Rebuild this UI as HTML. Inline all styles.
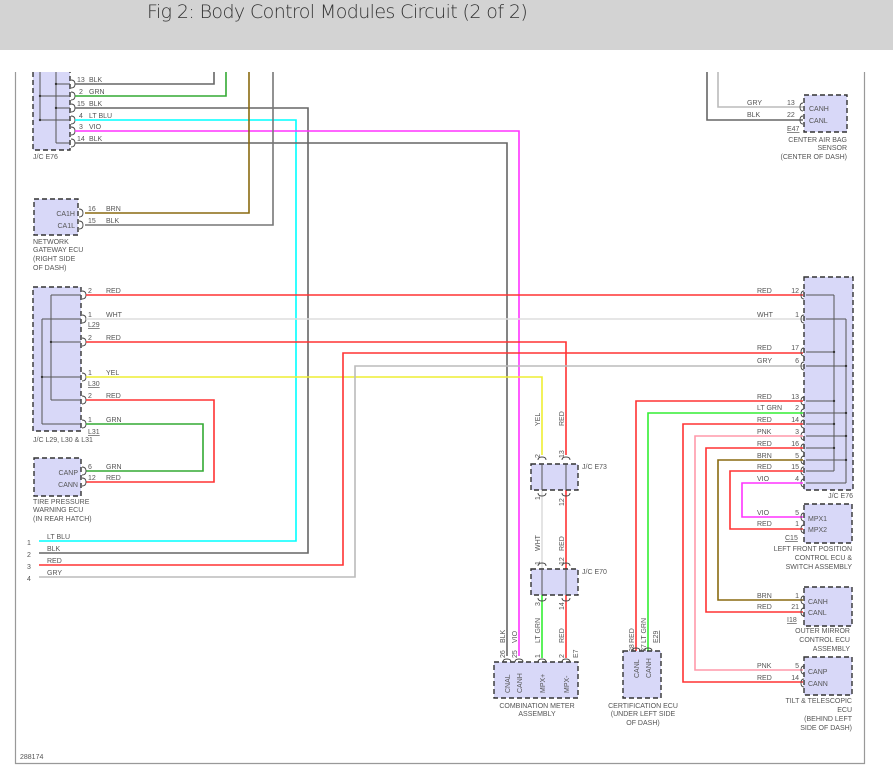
<!DOCTYPE html>
<html><head><meta charset="utf-8"><style>
html,body{margin:0;padding:0;background:#fff;width:893px;height:783px;overflow:hidden}
#hdr{position:absolute;left:0;top:0;width:893px;height:50px;background:#d3d3d3}
#hdr span{position:absolute;left:147px;top:1px;font:19px "DejaVu Sans","Liberation Sans",sans-serif;font-weight:300;color:#333;letter-spacing:-0.6px}
svg{position:absolute;left:0;top:0}
text{font-family:"Liberation Sans",sans-serif;font-size:7px;fill:#555}
.w{fill:none;stroke-width:1.6}
.bx{fill:#d8d8f8;stroke:#333;stroke-width:1.4;stroke-dasharray:5,3}
.in{stroke:#555;stroke-width:1;fill:none}
.pin{stroke:#444;stroke-width:0.9;fill:none}
</style></head><body>
<div id="hdr"><span>Fig 2: Body Control Modules Circuit (2 of 2)</span></div>
<svg width="893" height="783" viewBox="0 0 893 783">
<path d="M15.5 72V763.5H864.5V72" fill="none" stroke="#999" stroke-width="1.2"/>
<text x="20" y="759" font-size="6.5">288174</text>

<rect x="33" y="72" width="37" height="78" fill="#d8d8f8"/>
<path d="M33 72V150H70V72" fill="none" stroke="#333" stroke-width="1.4" stroke-dasharray="5,3"/>
<path class="in" d="M40 72V120M56 72V143M56 84H70M40 96H70M56 108H70M40 120H70M56 143H70"/>
<g fill="#333"><circle cx="56" cy="84" r="1.2"/><circle cx="40" cy="96" r="1.2"/><circle cx="56" cy="108" r="1.2"/><circle cx="40" cy="120" r="1.2"/></g>
<g class="pin"><path d="M71 80q4 0 4 4q0 4-4 4M71 92q4 0 4 4q0 4-4 4M71 104q4 0 4 4q0 4-4 4M71 116q4 0 4 4q0 4-4 4M71 127q4 0 4 4q0 4-4 4M71 139q4 0 4 4q0 4-4 4"/></g>
<text x="77" y="82">13</text><text x="89" y="82">BLK</text>
<text x="79" y="94">2</text><text x="89" y="94">GRN</text>
<text x="77" y="106">15</text><text x="89" y="106">BLK</text>
<text x="79" y="118">4</text><text x="89" y="118">LT BLU</text>
<text x="79" y="129">3</text><text x="89" y="129">VIO</text>
<text x="77" y="141">14</text><text x="89" y="141">BLK</text>
<text x="33" y="159" font-size="6.5">J/C E76</text>
<path class="w" stroke="#666" d="M75 84H214V72"/>
<path class="w" stroke="#3a3" d="M75 96H226V72"/>
<path class="w" stroke="#666" d="M75 108H308V553H39"/>
<path class="w" stroke="#0ff" d="M75 120H296V541H39"/>
<path class="w" stroke="#f3f" d="M75 131H519V656"/>
<path class="w" stroke="#666" d="M75 143H507V656"/>
<path class="w" stroke="#8a6a10" d="M85 213H249V72"/>
<path class="w" stroke="#777" d="M85 225H273V72"/>

<rect class="bx" x="34" y="199" width="44" height="36"/>
<text x="75" y="216" text-anchor="end">CA1H</text><text x="75" y="228" text-anchor="end">CA1L</text>
<g class="pin"><path d="M79 209q4 0 4 4q0 4-4 4M79 221q4 0 4 4q0 4-4 4"/></g>
<text x="88" y="211">16</text><text x="106" y="211">BRN</text>
<text x="88" y="223">15</text><text x="106" y="223">BLK</text>
<text x="33" y="244">NETWORK</text><text x="33" y="252">GATEWAY ECU</text><text x="33" y="261">(RIGHT SIDE</text><text x="33" y="270">OF DASH)</text>

<rect class="bx" x="33" y="287" width="48" height="144"/>
<path class="in" d="M51 295V400M42 319V424M51 295H81M42 319H81M51 342H81M42 377H81M51 400H81M42 424H81"/>
<g fill="#333"><circle cx="51" cy="342" r="1.2"/><circle cx="42" cy="377" r="1.2"/></g>
<g class="pin"><path d="M82 291q4 0 4 4q0 4-4 4M82 315q4 0 4 4q0 4-4 4M82 338q4 0 4 4q0 4-4 4M82 373q4 0 4 4q0 4-4 4M82 396q4 0 4 4q0 4-4 4M82 420q4 0 4 4q0 4-4 4"/></g>
<text x="88" y="293">2</text><text x="106" y="293">RED</text>
<text x="88" y="317">1</text><text x="106" y="317">WHT</text><text x="88" y="327" text-decoration="underline">L29</text>
<text x="88" y="340">2</text><text x="106" y="340">RED</text>
<text x="88" y="375">1</text><text x="106" y="375">YEL</text><text x="88" y="386" text-decoration="underline">L30</text>
<text x="88" y="398">2</text><text x="106" y="398">RED</text>
<text x="88" y="422">1</text><text x="106" y="422">GRN</text><text x="88" y="434" text-decoration="underline">L31</text>
<text x="33" y="442">J/C L29, L30 &amp; L31</text>
<path class="w" stroke="#f33" d="M86 295H803"/>
<path class="w" stroke="#ddd" d="M86 319H803"/>
<path class="w" stroke="#f33" d="M86 342H566V455"/>
<path class="w" stroke="#ee3" d="M86 377H542V455"/>
<path class="w" stroke="#f33" d="M86 400H214V482H86"/>
<path class="w" stroke="#3a3" d="M86 424H203V471H86"/>

<rect class="bx" x="34" y="458" width="47" height="38"/>
<text x="78" y="475" text-anchor="end">CANP</text><text x="78" y="487" text-anchor="end">CANN</text>
<g class="pin"><path d="M82 467q4 0 4 4q0 4-4 4M82 478q4 0 4 4q0 4-4 4"/></g>
<text x="88" y="469">6</text><text x="106" y="469">GRN</text>
<text x="88" y="480">12</text><text x="106" y="480">RED</text>
<text x="33" y="504">TIRE PRESSURE</text><text x="33" y="512">WARNING ECU</text><text x="33" y="521">(IN REAR HATCH)</text>

<text x="27" y="545">1</text><text x="27" y="557">2</text><text x="27" y="569">3</text><text x="27" y="581">4</text>
<text x="47" y="539">LT BLU</text><text x="47" y="551">BLK</text><text x="47" y="563">RED</text><text x="47" y="575">GRY</text>
<path class="w" stroke="#f33" stroke-width="2" d="M39 565H343V353H803"/>
<path class="w" stroke="#bbb" d="M39 577H355V366H803"/>

<path class="w" stroke="#bbb" d="M718 72V107H803"/>
<path class="w" stroke="#666" d="M707 72V120H803"/>
<rect class="bx" x="804" y="95" width="43" height="37"/>
<g class="pin"><path d="M803 103q-3 0-3 4q0 4 3 4M803 116q-3 0-3 4q0 4 3 4"/></g>
<text x="809" y="111">CANH</text><text x="809" y="123">CANL</text>
<text x="747" y="105">GRY</text><text x="787" y="105">13</text>
<text x="747" y="117">BLK</text><text x="787" y="117">22</text>
<text x="787" y="131" text-decoration="underline">E47</text>
<text x="847" y="142" text-anchor="end">CENTER AIR BAG</text><text x="847" y="150" text-anchor="end">SENSOR</text><text x="847" y="159" text-anchor="end">(CENTER OF DASH)</text>

<rect class="bx" x="804" y="277" width="49" height="213"/>
<path class="in" d="M834 295V471M846 319V483M806 295H834M806 319H846M806 352H834M806 366H846M806 401H834M806 413H846M806 424H834M806 436H846M806 448H834M806 460H846M806 471H834M806 483H846"/>
<g fill="#333"><circle cx="834" cy="352" r="1.2"/><circle cx="846" cy="366" r="1.2"/><circle cx="834" cy="401" r="1.2"/><circle cx="846" cy="413" r="1.2"/><circle cx="834" cy="424" r="1.2"/><circle cx="846" cy="436" r="1.2"/><circle cx="834" cy="448" r="1.2"/><circle cx="846" cy="460" r="1.2"/></g>
<g class="pin"><path d="M804 291q-3 0-3 4q0 4 3 4M804 315q-3 0-3 4q0 4 3 4M804 348q-3 0-3 4q0 4 3 4M804 362q-3 0-3 4q0 4 3 4M804 397q-3 0-3 4q0 4 3 4M804 409q-3 0-3 4q0 4 3 4M804 420q-3 0-3 4q0 4 3 4M804 432q-3 0-3 4q0 4 3 4M804 444q-3 0-3 4q0 4 3 4M804 456q-3 0-3 4q0 4 3 4M804 467q-3 0-3 4q0 4 3 4M804 479q-3 0-3 4q0 4 3 4"/></g>
<g text-anchor="end">
<text x="799" y="293">12</text><text x="799" y="317">1</text><text x="799" y="350">17</text><text x="799" y="363">6</text>
<text x="799" y="399">13</text><text x="799" y="410">2</text><text x="799" y="422">14</text><text x="799" y="434">3</text>
<text x="799" y="446">16</text><text x="799" y="458">5</text><text x="799" y="469">15</text><text x="799" y="481">4</text>
</g>
<text x="757" y="293">RED</text><text x="757" y="317">WHT</text><text x="757" y="350">RED</text><text x="757" y="363">GRY</text>
<text x="757" y="399">RED</text><text x="757" y="410">LT GRN</text><text x="757" y="422">RED</text><text x="757" y="434">PNK</text>
<text x="757" y="446">RED</text><text x="757" y="458">BRN</text><text x="757" y="469">RED</text><text x="757" y="481">VIO</text>
<text x="853" y="498" text-anchor="end">J/C E76</text>
<path class="w" stroke="#f33" d="M803 401H636V652"/>
<path class="w" stroke="#3e3" d="M803 413H648V652"/>
<path class="w" stroke="#f33" d="M803 424H683V682H803"/>
<path class="w" stroke="#f9a" d="M803 436H695V670H803"/>
<path class="w" stroke="#f33" d="M803 448H706V612H803"/>
<path class="w" stroke="#8a6a10" d="M803 460H718V600H803"/>
<path class="w" stroke="#f33" d="M803 471H730V529H803"/>
<path class="w" stroke="#f3f" d="M803 483H742V517H803"/>

<rect class="bx" x="804" y="504" width="48" height="39"/>
<g class="pin"><path d="M804 513q-3 0-3 4q0 4 3 4M804 525q-3 0-3 4q0 4 3 4"/></g>
<text x="808" y="521">MPX1</text><text x="808" y="532">MPX2</text>
<text x="757" y="515">VIO</text><text x="799" y="515" text-anchor="end">5</text>
<text x="757" y="526">RED</text><text x="799" y="526" text-anchor="end">1</text>
<text x="785" y="540" text-decoration="underline">C15</text>
<g text-anchor="end"><text x="852" y="551">LEFT FRONT POSITION</text><text x="852" y="560">CONTROL ECU &amp;</text><text x="852" y="569">SWITCH ASSEMBLY</text></g>

<rect class="bx" x="804" y="587" width="48" height="39"/>
<g class="pin"><path d="M804 596q-3 0-3 4q0 4 3 4M804 608q-3 0-3 4q0 4 3 4"/></g>
<text x="808" y="604">CANH</text><text x="808" y="615">CANL</text>
<text x="757" y="598">BRN</text><text x="799" y="598" text-anchor="end">1</text>
<text x="757" y="609">RED</text><text x="799" y="609" text-anchor="end">21</text>
<text x="787" y="622" text-decoration="underline">I18</text>
<g text-anchor="end"><text x="850" y="633">OUTER MIRROR</text><text x="850" y="642">CONTROL ECU</text><text x="850" y="651">ASSEMBLY</text></g>

<rect class="bx" x="804" y="657" width="48" height="38"/>
<g class="pin"><path d="M804 666q-3 0-3 4q0 4 3 4M804 679q-3 0-3 4q0 4 3 4"/></g>
<text x="808" y="674">CANP</text><text x="808" y="686">CANN</text>
<text x="757" y="668">PNK</text><text x="799" y="668" text-anchor="end">5</text>
<text x="757" y="680">RED</text><text x="799" y="680" text-anchor="end">14</text>
<g text-anchor="end"><text x="852" y="703">TILT &amp; TELESCOPIC</text><text x="852" y="712">ECU</text><text x="852" y="721">(BEHIND LEFT</text><text x="852" y="730">SIDE OF DASH)</text></g>

<path class="w" stroke="#ddd" d="M542 490V569"/>
<path class="w" stroke="#f33" d="M566 490V569"/>
<path class="w" stroke="#3e3" d="M542 595V658"/>
<path class="w" stroke="#f33" d="M566 595V658"/>
<rect class="bx" x="531" y="464" width="47" height="26"/>
<rect class="bx" x="531" y="569" width="47" height="26"/>
<path class="in" d="M542 464V490M566 464V490M542 569V595M566 569V595"/>
<g class="pin"><path d="M538 460q0-3 4-3q4 0 4 3M562 460q0-3 4-3q4 0 4 3M538 493q0 3 4 3q4 0 4-3M562 493q0 3 4 3q4 0 4-3M538 566q0-3 4-3q4 0 4 3M562 566q0-3 4-3q4 0 4 3M538 598q0 3 4 3q4 0 4-3M562 598q0 3 4 3q4 0 4-3"/></g>
<text x="582" y="469">J/C E73</text><text x="582" y="574">J/C E70</text>
<g>
<text transform="translate(540,458) rotate(-90)">2</text><text transform="translate(564,458) rotate(-90)">13</text>
<text transform="translate(540,500) rotate(-90)">1</text><text transform="translate(564,506) rotate(-90)">12</text>
<text transform="translate(540,565) rotate(-90)">1</text><text transform="translate(564,565) rotate(-90)">12</text>
<text transform="translate(540,606) rotate(-90)">3</text><text transform="translate(564,610) rotate(-90)">14</text>
<text transform="translate(540,426) rotate(-90)">YEL</text><text transform="translate(564,426) rotate(-90)">RED</text>
<text transform="translate(540,551) rotate(-90)">WHT</text><text transform="translate(564,551) rotate(-90)">RED</text>
<text transform="translate(540,643) rotate(-90)">LT GRN</text><text transform="translate(564,643) rotate(-90)">RED</text>
<text transform="translate(505,643) rotate(-90)">BLK</text><text transform="translate(517,643) rotate(-90)">VIO</text>
<text transform="translate(505,658) rotate(-90)">26</text><text transform="translate(517,658) rotate(-90)">25</text>
<text transform="translate(540,658) rotate(-90)">1</text><text transform="translate(564,658) rotate(-90)">2</text>
<text transform="translate(578,658) rotate(-90)">E7</text>
<text transform="translate(634,643) rotate(-90)">RED</text><text transform="translate(646,643) rotate(-90)">LT GRN</text>
<text transform="translate(634,652) rotate(-90)">28</text><text transform="translate(646,652) rotate(-90)">27</text>
<text transform="translate(658,643) rotate(-90)" text-decoration="underline">E29</text>
</g>

<rect class="bx" x="494" y="662" width="84" height="36"/>
<g class="pin"><path d="M503 662q0-3 4-3q4 0 4 3M515 662q0-3 4-3q4 0 4 3M538 662q0-3 4-3q4 0 4 3M562 662q0-3 4-3q4 0 4 3"/></g>
<text transform="translate(510,693) rotate(-90)">CNAL</text><text transform="translate(522,693) rotate(-90)">CANH</text>
<text transform="translate(545,693) rotate(-90)">MPX+</text><text transform="translate(569,693) rotate(-90)">MPX-</text>
<text x="537" y="708" text-anchor="middle">COMBINATION METER</text><text x="537" y="716" text-anchor="middle">ASSEMBLY</text>

<rect class="bx" x="623" y="651" width="38" height="47"/>
<g class="pin"><path d="M632 651q0-3 4-3q4 0 4 3M644 651q0-3 4-3q4 0 4 3"/></g>
<text transform="translate(639,678) rotate(-90)">CANL</text><text transform="translate(651,678) rotate(-90)">CANH</text>
<text x="643" y="708" text-anchor="middle">CERTIFICATION ECU</text><text x="643" y="716" text-anchor="middle">(UNDER LEFT SIDE</text><text x="643" y="725" text-anchor="middle">OF DASH)</text>
</svg>
</body></html>
